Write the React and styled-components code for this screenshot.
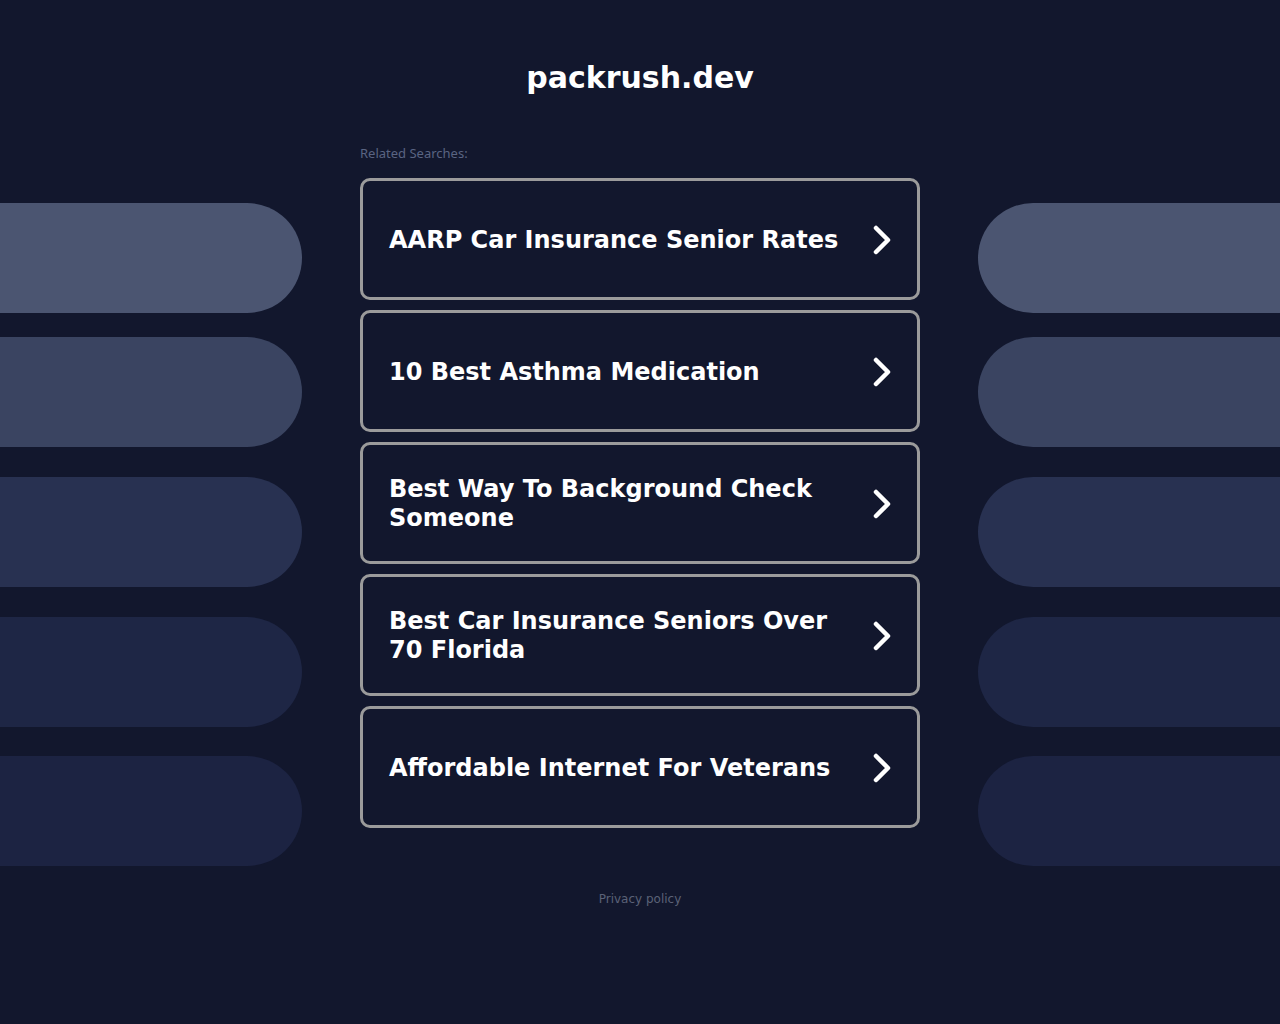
import React from 'react'
import styled, { createGlobalStyle } from 'styled-components'

const searches = [
    'AARP Car Insurance Senior Rates',
    '10 Best Asthma Medication',
    'Best Way To Background Check Someone',
    'Best Car Insurance Seniors Over 70 Florida',
    'Affordable Internet For Veterans',
]

const pills = [
    { color: '#4b5571', gap: 0 },
    { color: '#3a4461', gap: 24 },
    { color: '#283151', gap: 30 },
    { color: '#1e2645', gap: 30 },
    { color: '#1c2342', gap: 29 },
]

const Chevron = () => (
    <svg width="20" height="30" viewBox="0 0 20 30" fill="none">
        <polyline points="4,3 16,15 4,27" stroke="#fff" strokeWidth="4.5" strokeLinecap="round" strokeLinejoin="round" />
    </svg>
)

const App = () => {
    return (
        <>
            <GlobalStyle />
            <Page>
                <Side side="left">
                    {pills.map((p, i) => (
                        <Pill key={i} side="left" color={p.color} gap={p.gap} />
                    ))}
                </Side>
                <Main>
                    <Title>packrush.dev</Title>
                    <Results>
                        <Label>Related Searches:</Label>
                        <List>
                            {searches.map((s) => (
                                <Card key={s} href="#">
                                    <CardText>{s}</CardText>
                                    <Chevron />
                                </Card>
                            ))}
                        </List>
                    </Results>
                    <Footer href="#">Privacy policy</Footer>
                </Main>
                <Side side="right">
                    {pills.map((p, i) => (
                        <Pill key={i} side="right" color={p.color} gap={p.gap} />
                    ))}
                </Side>
            </Page>
        </>
    )
}

export default App

const GlobalStyle = createGlobalStyle`
html, body {
    margin: 0;
    padding: 0;
    background: #12172d;
}
body {
    font-family: "DejaVu Sans", sans-serif;
    min-height: 1024px;
}
`
const Page = styled.div`
display: grid;
grid-template-columns: 302px 1fr 302px;
min-height: 1024px;
background: #12172d;
`
const Side = styled.div`
display: flex;
flex-direction: column;
padding-top: 203px;
`
const Pill = styled.div`
height: 110px;
margin-top: ${(p) => p.gap}px;
background: ${(p) => p.color};
border-radius: ${(p) => (p.side === 'left' ? '0 55px 55px 0' : '55px 0 0 55px')};
`
const Main = styled.div`
display: flex;
flex-direction: column;
align-items: center;
`
const Title = styled.h1`
margin: 59px 0 0;
font-size: 30px;
line-height: 38px;
font-weight: 700;
color: #fff;
`
const Results = styled.div`
width: 560px;
margin-top: 48px;
`
const Label = styled.div`
font-family: "Noto Sans", sans-serif;
font-size: 13px;
line-height: 16px;
color: #5a6482;
margin-bottom: 17px;
`
const List = styled.div`
display: flex;
flex-direction: column;
gap: 10px;
`
const Card = styled.a`
display: flex;
align-items: center;
justify-content: space-between;
box-sizing: border-box;
height: 122px;
padding: 2px 25px 0 26px;
border: 3px solid #9b9b9b;
border-radius: 10px;
text-decoration: none;
color: #fff;
svg {
    flex-shrink: 0;
    margin-left: 20px;
}
`
const CardText = styled.span`
font-size: 24px;
line-height: 29px;
font-weight: 700;
`
const Footer = styled.a`
margin-top: 63px;
font-size: 12px;
line-height: 16px;
color: #5b6277;
text-decoration: none;
`
